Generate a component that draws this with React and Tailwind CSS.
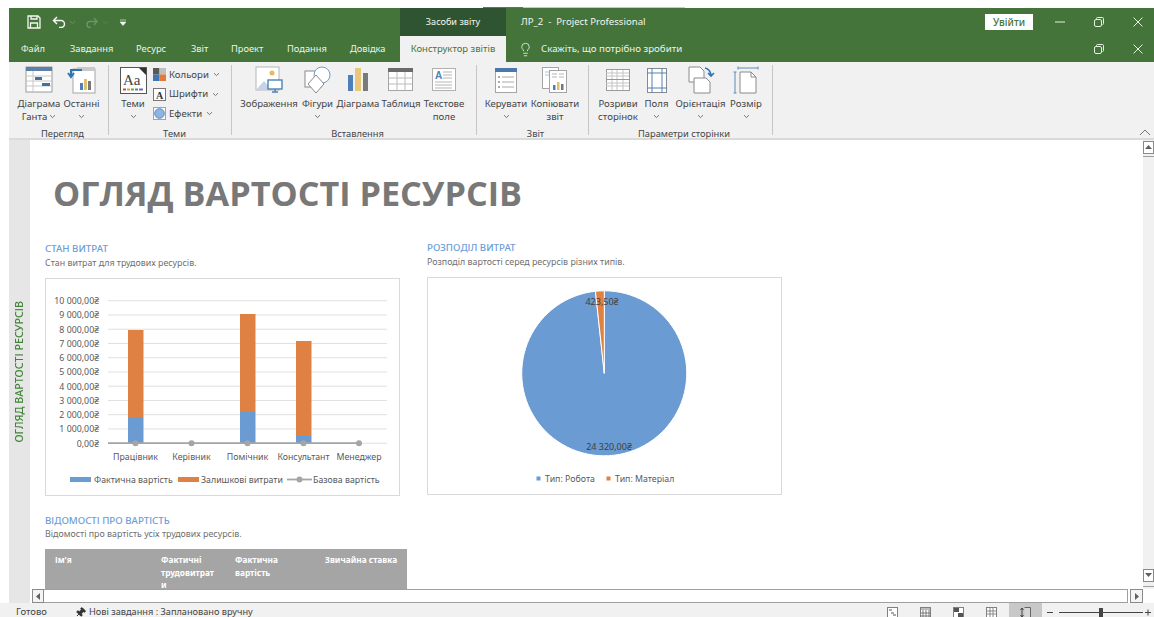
import { Pin, Lightbulb } from 'lucide-react'

const Chev = ({ className = '' }) => (
  <svg width="7" height="5" viewBox="0 0 7 5" className={className}>
    <path d="M1 1.2 3.5 3.6 6 1.2" fill="none" stroke="#777" strokeWidth="1" />
  </svg>
)

const Ico = ({ children }) => (
  <svg width="32" height="28" viewBox="0 0 32 28" fill="none">
    {children}
  </svg>
)

const GanttIcon = () => (
  <Ico>
    <rect x="3" y="1" width="26" height="25" fill="#fff" stroke="#9a9a9a" />
    <rect x="3" y="1" width="26" height="4" fill="#5a7fa8" />
    <path d="M3 10h26M3 15h26M3 20h26M10 5v21" stroke="#c8c8c8" />
    <rect x="12" y="11" width="7" height="3" fill="#41719c" />
    <rect x="19" y="17" width="8" height="3" fill="#41719c" />
  </Ico>
)
const RecentIcon = () => (
  <Ico>
    <rect x="7" y="3" width="22" height="24" fill="#fff" stroke="#a5a5a5" />
    <rect x="11" y="1" width="18" height="4" fill="#c9c9c9" />
    <rect x="14" y="17" width="3" height="7" fill="#4e7fb8" />
    <rect x="18" y="13" width="3" height="11" fill="#e0c070" />
    <rect x="22" y="15" width="3" height="9" fill="#777" />
    <path d="M16 4H5v6M2 7l3 4 3-4" stroke="#2e74b5" strokeWidth="2" />
  </Ico>
)
const ThemesIcon = () => (
  <svg width="27" height="27" viewBox="0 0 27 27" fill="none">
    <rect x=".5" y=".5" width="26" height="26" fill="#fff" stroke="#555" />
    <path d="M19 1h7v7z" fill="#333" />
    <text x="3" y="18" fontFamily="Liberation Serif, serif" fontSize="15" fill="#444">Aa</text>
    <path d="M3 22.5h3" stroke="#c0504d" strokeWidth="2" />
    <path d="M7 22.5h3" stroke="#e0a030" strokeWidth="2" />
    <path d="M11 22.5h3" stroke="#70a050" strokeWidth="2" />
    <path d="M15 22.5h3" stroke="#4e7fb8" strokeWidth="2" />
    <path d="M19 22.5h4" stroke="#8064a2" strokeWidth="2" />
  </svg>
)
const ColorsIcon = () => (
  <svg width="13" height="13" viewBox="0 0 13 13">
    <rect width="6.5" height="6.5" fill="#595959" />
    <rect x="6.5" width="6.5" height="6.5" fill="#bfbfbf" />
    <rect y="6.5" width="6.5" height="6.5" fill="#3f76b5" />
    <rect x="6.5" y="6.5" width="6.5" height="6.5" fill="#e07b39" />
  </svg>
)
const FontsIcon = () => (
  <svg width="13" height="13" viewBox="0 0 13 13">
    <rect x=".5" y=".5" width="12" height="12" fill="#fff" stroke="#777" />
    <text x="3" y="10.5" fontFamily="Liberation Serif, serif" fontWeight="700" fontSize="10" fill="#333">A</text>
  </svg>
)
const EffectsIcon = () => (
  <svg width="13" height="13" viewBox="0 0 13 13">
    <rect x=".5" y=".5" width="12" height="12" fill="#fff" stroke="#8aa9c9" />
    <circle cx="6.5" cy="6.5" r="4.8" fill="#8db4e2" stroke="#5a8ac0" />
  </svg>
)
const ImageIcon = () => (
  <Ico>
    <rect x="3" y="1" width="23" height="23" fill="#fff" stroke="#b5b5b5" />
    <circle cx="19" cy="7" r="2.5" fill="#e8b860" />
    <path d="M3 24l8-9 8 9z" fill="#c3d4e6" />
    <rect x="15" y="14" width="14" height="9" fill="#fff" stroke="#4e82bb" strokeWidth="1.4" />
    <path d="M19 26h6M22 23v3" stroke="#4e82bb" strokeWidth="1.4" />
  </Ico>
)
const ShapesIcon = () => (
  <Ico>
    <rect x="3" y="5" width="16" height="16" fill="#fff" stroke="#8a8a8a" />
    <circle cx="20" cy="9" r="8" fill="#fff" stroke="#6a9bd0" />
    <path d="M14 9l8 9-8 9-8-9z" fill="#fff" stroke="#8a8a8a" />
  </Ico>
)
const ChartIcon = () => (
  <Ico>
    <rect x="6" y="9" width="5" height="16" fill="#4e7fb8" />
    <rect x="13" y="2" width="6" height="23" fill="#e8c878" />
    <rect x="21" y="7" width="5" height="18" fill="#7a7a7a" />
  </Ico>
)
const TableIcon = () => (
  <Ico>
    <rect x="3.5" y="3.5" width="24" height="21" fill="#fff" stroke="#a5a5a5" />
    <rect x="3" y="2" width="25" height="4" fill="#6a6a6a" />
    <path d="M4 12h23M4 18h23M12 6v18M20 6v18" stroke="#bcbcbc" />
  </Ico>
)
const TextBoxIcon = () => (
  <Ico>
    <rect x="4.5" y="2.5" width="23" height="22" fill="#fff" stroke="#b0b0b0" />
    <text x="7" y="13" fontFamily="Liberation Sans, sans-serif" fontWeight="700" fontSize="10" fill="#4e82bb">A</text>
    <path d="M15 6h9M15 9h9M15 12h9M7 16h17M7 19h17M7 22h17" stroke="#b5b5b5" />
  </Ico>
)
const ManageIcon = () => (
  <Ico>
    <rect x="5.5" y="2.5" width="21" height="24" fill="#fff" stroke="#a5a5a5" />
    <rect x="5" y="2" width="22" height="4" fill="#4a78ad" />
    <path d="M8 11h2M8 16h2M8 21h2" stroke="#555" />
    <path d="M12 11h12M12 16h12M12 21h12" stroke="#aaa" />
  </Ico>
)
const CopyIcon = () => (
  <Ico>
    <rect x="3.5" y="1.5" width="16" height="21" fill="#fff" stroke="#a5a5a5" />
    <path d="M6 6h10M6 9h10" stroke="#a9c2de" />
    <rect x="10.5" y="4.5" width="17" height="22" fill="#fff" stroke="#a5a5a5" />
    <path d="M13 8h5M13 11h5M20 8h5M20 11h5" stroke="#b5b5b5" />
    <rect x="14" y="19" width="2.5" height="5" fill="#4e7fb8" />
    <rect x="18" y="16" width="2.5" height="8" fill="#e0c070" />
    <rect x="22" y="18" width="2.5" height="6" fill="#777" />
  </Ico>
)
const BreaksIcon = () => (
  <Ico>
    <rect x="4.5" y="3.5" width="23" height="21" fill="#fff" stroke="#9a9a9a" />
    <path d="M4 7h23M4 10h23M4 17h23M4 20h23M10 4v20M15 4v20M21 4v20" stroke="#c4c4c4" />
    <path d="M4 13.5h24" stroke="#7a9cc4" />
  </Ico>
)
const MarginsIcon = () => (
  <Ico>
    <rect x="6.5" y="2.5" width="19" height="24" fill="#fff" stroke="#8a8a8a" />
    <path d="M6 7h20M6 22h20" stroke="#4e82bb" />
    <path d="M11 2v25M21 2v25" stroke="#4e82bb" />
  </Ico>
)
const OrientationIcon = () => (
  <Ico>
    <path d="M4 1h11l4 4v11H4z" fill="#fff" stroke="#8a8a8a" />
    <path d="M9 12h12l4 4v11H9z" fill="#fff" stroke="#8a8a8a" />
    <path d="M20 2q5 1 6 7M23 7l3 3 3-3" stroke="#2e74b5" strokeWidth="1.6" />
  </Ico>
)
const SizeIcon = () => (
  <Ico>
    <path d="M10 6h11l5 5v16H10z" fill="#fff" stroke="#8a8a8a" />
    <path d="M21 6v5h5" stroke="#8a8a8a" />
    <path d="M8 2h20M8 .5v3M28 .5v3" stroke="#5a8ac0" />
    <path d="M5 6v21M3.5 6h3M3.5 27h3" stroke="#5a8ac0" />
  </Ico>
)

function RibbonButton({ icon, lines, chev, width }) {
  return (
    <div className={`flex shrink-0 flex-col items-center pt-[4px] ${width}`}>
      <div className="flex h-[28px] items-center justify-center">{icon}</div>
      <div className="mt-[3px] flex h-[13px] items-center gap-[2px] whitespace-nowrap leading-[13px]">
        {lines[0]}
        {chev === 'first' && <Chev />}
      </div>
      <div className="flex h-[13px] items-center gap-[2px] whitespace-nowrap leading-[13px]">
        {lines[1]}
        {chev === 'second' && <Chev />}
        {chev === 'below' && <Chev />}
      </div>
    </div>
  )
}

function Group({ label, className, children }) {
  return (
    <div className={`flex shrink-0 flex-col ${className}`}>
      <div className="flex h-[66px]">{children}</div>
      <div className="h-[10px] text-center text-[9.3px] leading-[12px]">{label}</div>
    </div>
  )
}

const Sep = () => <div className="my-[3px] w-px shrink-0 bg-[#c6c6c6]" />

function ThemeRow({ icon, label }) {
  return (
    <div className="flex h-[19.5px] items-center gap-[3px] whitespace-nowrap">
      {icon}
      <span>{label}</span>
      <Chev className="ml-px" />
    </div>
  )
}

function Ribbon() {
  return (
    <div className="flex h-[78px] shrink-0 border-b-2 border-[#dadada] bg-[#f1f1f1] text-[9.6px] text-[#444]">
      <Group label="Перегляд" className="w-[99px] pl-[8px]">
        <RibbonButton width="w-[44px]" icon={<GanttIcon />} lines={['Діаграма', 'Ганта']} chev="second" />
        <RibbonButton width="w-[41px]" icon={<RecentIcon />} lines={['Останні', '']} chev="below" />
      </Group>
      <Sep />
      <Group label="Теми" className="w-[122px] pl-[9px]">
        <RibbonButton width="w-[30px]" icon={<ThemesIcon />} lines={['Теми', '']} chev="below" />
        <div className="ml-[5px] flex flex-col pt-[3px]">
          <ThemeRow icon={<ColorsIcon />} label="Кольори" />
          <ThemeRow icon={<FontsIcon />} label="Шрифти" />
          <ThemeRow icon={<EffectsIcon />} label="Ефекти" />
        </div>
      </Group>
      <Sep />
      <Group label="Вставлення" className="w-[244px] pl-[7px]">
        <RibbonButton width="w-[60px]" icon={<ImageIcon />} lines={['Зображення', '']} />
        <RibbonButton width="w-[37px]" icon={<ShapesIcon />} lines={['Фігури', '']} chev="below" />
        <RibbonButton width="w-[44px]" icon={<ChartIcon />} lines={['Діаграма', '']} />
        <RibbonButton width="w-[42px]" icon={<TableIcon />} lines={['Таблиця', '']} />
        <RibbonButton width="w-[44px]" icon={<TextBoxIcon />} lines={['Текстове', 'поле']} />
      </Group>
      <Sep />
      <Group label="Звіт" className="w-[111px] pl-[6px]">
        <RibbonButton width="w-[46px]" icon={<ManageIcon />} lines={['Керувати', '']} chev="below" />
        <RibbonButton width="w-[52px]" icon={<CopyIcon />} lines={['Копіювати', 'звіт']} />
      </Group>
      <Sep />
      <Group label="Параметри сторінки" className="w-[183px] pl-[7px]">
        <RibbonButton width="w-[44px]" icon={<BreaksIcon />} lines={['Розриви', 'сторінок']} />
        <RibbonButton width="w-[33px]" icon={<MarginsIcon />} lines={['Поля', '']} chev="below" />
        <RibbonButton width="w-[55px]" icon={<OrientationIcon />} lines={['Орієнтація', '']} chev="below" />
        <RibbonButton width="w-[36px]" icon={<SizeIcon />} lines={['Розмір', '']} chev="below" />
      </Group>
      <Sep />
      <div className="ml-auto flex items-end pb-[2px] pr-[3px]">
        <svg width="12" height="7" viewBox="0 0 12 7">
          <path d="M1 6l5-5 5 5" fill="none" stroke="#777" />
        </svg>
      </div>
    </div>
  )
}

function WindowButtons({ minimize }) {
  const stroke = '#e6efe3'
  return (
    <div className="flex items-center">
      {minimize && (
        <svg width="10" height="2" viewBox="0 0 10 2" className="mr-[29px]">
          <path d="M0 1h10" stroke={stroke} />
        </svg>
      )}
      <svg width="10" height="10" viewBox="0 0 10 10" className="mr-[29px]">
        <rect x=".5" y="2.5" width="7" height="7" rx="1.5" fill="none" stroke={stroke} />
        <path d="M2.5 2.5V1.5a1 1 0 0 1 1-1h5a1 1 0 0 1 1 1v5a1 1 0 0 1-1 1" fill="none" stroke={stroke} />
      </svg>
      <svg width="10" height="10" viewBox="0 0 10 10" className="mr-[11px]">
        <path d="M.5.5l9 9M9.5.5l-9 9" stroke={stroke} />
      </svg>
    </div>
  )
}

function TitleBar() {
  return (
    <div className="flex h-[28px] shrink-0 items-center bg-[#44743a] text-[10px] text-[#f3f6f1]">
      <div className="flex h-full w-[391px] items-center pl-[18px]">
        <svg width="14" height="14" viewBox="0 0 14 14" fill="none" stroke="#f3f6f1" strokeWidth="1.3">
          <path d="M1 1h10l2 2v10H1z" />
          <path d="M4 1v3h6V1M3.5 13V8h7v5" />
        </svg>
        <svg width="14" height="12" viewBox="0 0 14 12" fill="none" stroke="#f3f6f1" strokeWidth="1.5" className="ml-[11px]">
          <path d="M5 1L1.5 4.5 5 8M2 4.5h7a3.5 3.5 0 0 1 0 7H7" />
        </svg>
        <Chev className="ml-[3px] opacity-80 invert" />
        <svg width="13" height="11" viewBox="0 0 13 11" fill="none" stroke="#6f9567" strokeWidth="1.4" className="ml-[9px]">
          <path d="M9 1l3 3.5L9 8M12 4.5H5a3 3 0 0 0 0 6h1" />
        </svg>
        <Chev className="ml-[4px] opacity-40 invert" />
        <svg width="6" height="7" viewBox="0 0 6 7" className="ml-[11px]">
          <path d="M0 1h6M0 3h6l-3 3.5z" fill="#f3f6f1" stroke="#f3f6f1" strokeWidth=".6" />
        </svg>
      </div>
      <div className="flex h-full w-[106px] items-center justify-center bg-[#2f5431] text-[9.1px]">Засоби звіту</div>
      <div className="ml-[15px] whitespace-pre text-[9.6px]">ЛР_2  -  Project Professional</div>
      <div className="ml-auto mr-[22px] flex h-[16px] w-[48px] items-center justify-center bg-white text-[10px] font-medium text-[#44743a]">
        Увійти
      </div>
      <WindowButtons minimize />
    </div>
  )
}

function TabBar() {
  const tabs = [
    ['Файл', 'w-[49px]'],
    ['Завдання', 'w-[66px]'],
    ['Ресурс', 'w-[55px]'],
    ['Звіт', 'w-[40px]'],
    ['Проект', 'w-[56px]'],
    ['Подання', 'w-[63px]'],
    ['Довідка', 'w-[50px]'],
  ]
  return (
    <div className="flex h-[26px] shrink-0 items-center bg-[#44743a] text-[9.3px] text-[#eef3ec]">
      <div className="flex w-[391px] shrink-0 pl-[12px]">
        {tabs.map(([name, width]) => (
          <span key={name} className={width}>{name}</span>
        ))}
      </div>
      <div className="flex h-full w-[106px] items-center justify-center bg-[#f1f1f1] text-[9.5px] text-[#44743a]">Конструктор звітів</div>
      <Lightbulb size={15} strokeWidth={1.3} className="ml-[12px]" />
      <span className="ml-[8px] text-[9.7px]">Скажіть, що потрібно зробити</span>
      <div className="ml-auto">
        <WindowButtons />
      </div>
    </div>
  )
}

function CostChart() {
  const ticks = ['10 000,00₴', '9 000,00₴', '8 000,00₴', '7 000,00₴', '6 000,00₴', '5 000,00₴', '4 000,00₴', '3 000,00₴', '2 000,00₴', '1 000,00₴', '0,00₴']
  const bars = [
    { x: 83, top: 52, mid: 140 },
    { x: 195, top: 36, mid: 134 },
    { x: 251, top: 63, mid: 158 },
  ]
  const cats = [
    ['Працівник', 90.5],
    ['Керівник', 146.5],
    ['Помічник', 202.5],
    ['Консультант', 258.5],
    ['Менеджер', 314],
  ]
  return (
    <svg width="353" height="216" viewBox="1 1 353 216" fontFamily="Noto Sans, sans-serif" fontSize="8.8" fill="#595959">
      {ticks.map((t, i) => {
        const y = 22.7 + i * 14.25
        return (
          <g key={t}>
            <path d={`M63 ${y}H342`} stroke="#e0e0e0" />
            <text x="54" y={y + 3.5} textAnchor="end">{t}</text>
          </g>
        )
      })}
      {bars.map((b) => (
        <g key={b.x}>
          <rect x={b.x} y={b.top} width="15.5" height={b.mid - b.top} fill="#e08144" />
          <rect x={b.x} y={b.mid} width="15.5" height={165 - b.mid} fill="#6a9bd2" />
        </g>
      ))}
      <path d="M63 165.2H314" stroke="#a5a5a5" strokeWidth="1.8" />
      {cats.map(([name, x]) => (
        <g key={name}>
          <circle cx={x} cy="165.2" r="3" fill="#a5a5a5" />
          <text x={x} y="182" textAnchor="middle">{name}</text>
        </g>
      ))}
      <rect x="25" y="199" width="21" height="5" fill="#6a9bd2" />
      <text x="49" y="204.5">Фактична вартість</text>
      <rect x="133" y="199" width="21" height="5" fill="#e08144" />
      <text x="156" y="204.5">Залишкові витрати</text>
      <path d="M242 201.5h25" stroke="#a5a5a5" strokeWidth="1.8" />
      <circle cx="254.5" cy="201.5" r="3" fill="#a5a5a5" />
      <text x="268" y="204.5">Базова вартість</text>
    </svg>
  )
}

function CostPie() {
  const cx = 177.3
  const cy = 96.3
  const r = 82.5
  const lx = cx - 8.85
  const ly = cy - 82.03
  return (
    <svg width="353" height="216" viewBox="1 1 353 216" fontFamily="Noto Sans, sans-serif" fontSize="9" fill="#404040">
      <path
        d={`M${cx} ${cy}L${cx} ${cy - r}A${r} ${r} 0 1 1 ${lx} ${ly}Z`}
        fill="#6a9bd2"
        stroke="#fff"
        strokeWidth="1"
      />
      <path d={`M${cx} ${cy}L${lx} ${ly}A${r} ${r} 0 0 1 ${cx} ${cy - r}Z`} fill="#e08144" stroke="#fff" strokeWidth="1" />
      <text x="175" y="27.5" textAnchor="middle">423,50₴</text>
      <text x="182" y="172.5" textAnchor="middle">24 320,00₴</text>
      <rect x="109.5" y="199.5" width="4" height="4" fill="#6a9bd2" />
      <text x="118" y="204.5" fontSize="8.8" fill="#595959">Тип: Робота</text>
      <rect x="179.5" y="199.5" width="4" height="4" fill="#e08144" />
      <text x="188" y="204.5" fontSize="8.8" fill="#595959">Тип: Матеріал</text>
    </svg>
  )
}

function ChartCard({ title, sub, className, children }) {
  return (
    <div className={`w-[355px] shrink-0 ${className}`}>
      <div className="h-[14px] text-[9.7px] font-medium leading-[14px] text-[#6d9ed6]">{title}</div>
      <div className="h-[14px] text-[8.85px] leading-[14px] text-[#6f6f6f]">{sub}</div>
      <div className="mt-[8px] h-[218px] w-[355px] border border-[#d9d9d9] bg-white">{children}</div>
    </div>
  )
}

function ScrollArrow({ dir }) {
  const d = {
    up: 'M4.5 2 8 6H1z',
    down: 'M1 2h7L4.5 6z',
    left: 'M6 1v7L2 4.5z',
    right: 'M3 1v7l4-3.5z',
  }[dir]
  return (
    <svg width="9" height="9" viewBox="0 0 9 9">
      <path d={d} fill="#606060" />
    </svg>
  )
}

function Report() {
  return (
    <div className="min-w-0 flex-1 overflow-hidden bg-white pl-[15px]">
      <div className="ml-[8px] whitespace-nowrap pt-[32px] font-['Open_Sans',sans-serif] text-[34.2px] font-bold leading-[42px] text-[#787878]">
        ОГЛЯД ВАРТОСТІ РЕСУРСІВ
      </div>
      <div className="mt-[28px] flex items-start">
        <ChartCard title="СТАН ВИТРАТ" sub="Стан витрат для трудових ресурсів.">
          <CostChart />
        </ChartCard>
        <ChartCard title="РОЗПОДІЛ ВИТРАТ" sub="Розподіл вартості серед ресурсів різних типів." className="-mt-px ml-[27px]">
          <CostPie />
        </ChartCard>
      </div>
      <div className="mt-[18px] h-[14px] text-[9.7px] font-medium leading-[14px] text-[#6d9ed6]">ВІДОМОСТІ ПРО ВАРТІСТЬ</div>
      <div className="h-[12px] text-[8.85px] leading-[12px] text-[#6f6f6f]">Відомості про вартість усіх трудових ресурсів.</div>
      <div className="mt-[9px] grid h-[56px] w-[362px] grid-cols-[116px_74px_90px_82px] bg-[#a5a5a5] pt-[5px] text-[8.3px] font-bold leading-[12.5px] text-white">
        <div className="pl-[10px]">Ім'я</div>
        <div>Фактичні<br />трудовитрат<br />и</div>
        <div>Фактична<br />вартість</div>
        <div>Звичайна ставка</div>
      </div>
    </div>
  )
}

function VerticalScroll() {
  return (
    <div className="flex w-[11px] shrink-0 flex-col bg-[#f1f1f1] pt-[1px]">
      <div className="flex h-[13px] items-center justify-center border border-[#8a8a8a] bg-white">
        <ScrollArrow dir="up" />
      </div>
      <div className="h-[3px] border-b border-[#a0a0a0]" />
      <div className="flex-1" />
      <div className="flex h-[13px] items-center justify-center border border-[#8a8a8a] bg-white">
        <ScrollArrow dir="down" />
      </div>
      <div className="mt-[4px] h-px bg-[#a0a0a0]" />
      <div className="h-[2px]" />
    </div>
  )
}

function HorizontalScroll() {
  return (
    <div className="flex h-[14px] shrink-0 bg-white pl-[2px] pr-[11px]">
      <div className="flex w-[12px] items-center justify-center border border-[#8a8a8a] bg-[#f4f4f4]">
        <ScrollArrow dir="left" />
      </div>
      <div className="flex-1 border-y border-r border-[#a0a0a0]" />
      <div className="ml-[2px] flex w-[13px] items-center justify-center border border-[#8a8a8a] bg-[#f4f4f4]">
        <ScrollArrow dir="right" />
      </div>
    </div>
  )
}

function StatusBar() {
  return (
    <div className="flex h-[18px] shrink-0 items-center bg-[#f1f1f1] text-[9.5px] text-[#444]">
      <span className="ml-[16px]">Готово</span>
      <Pin size={11} fill="#333" stroke="#333" className="ml-[28px] rotate-45" />
      <span className="ml-[3px] text-[9.2px]">Нові завдання : Заплановано вручну</span>
      <div className="ml-auto flex h-full items-center">
        {[0, 1, 2, 3].map((i) => (
          <svg key={i} width="11" height="11" viewBox="0 0 11 11" className={i === 0 ? '' : 'ml-[22px]'}>
            <rect x=".5" y=".5" width="10" height="10" fill="#fff" stroke="#808080" />
            {i === 0 && <path d="M2 3h3M4 6h3M6 8h3" stroke="#555" />}
            {i === 1 && <path d="M0 2h11M3 3v8M6 3v8M9 3v8M0 6h11M0 9h11" stroke="#777" />}
            {i === 2 && <path d="M1 1h5v4H1zM5 6h5v4H5z" fill="#555" />}
            {i === 3 && <path d="M4 0v11M7 0v11M0 4h11M0 7h11" stroke="#888" />}
          </svg>
        ))}
        <div className="ml-[12px] flex h-full w-[33px] items-center justify-center bg-[#c8c8c8]">
          <svg width="11" height="11" viewBox="0 0 11 11">
            <path d="M4.5.5h6v10h-6" fill="#d6d6d6" stroke="#666" />
            <path d="M2 1v9M.5 3 2 1l1.5 2M.5 8 2 10l1.5-2" fill="none" stroke="#444" />
          </svg>
        </div>
        <svg width="104" height="11" viewBox="0 0 104 11" className="ml-[5px] mr-[3px]">
          <path d="M0 5.5h6M98 5.5h6M101 2.5v6M12 5.5h84" stroke="#444" />
          <rect x="52" y="1" width="4" height="9" fill="#444" />
        </svg>
      </div>
    </div>
  )
}

export default function App() {
  return (
    <div className="h-[617px] w-[1154px] overflow-hidden bg-white">
      <div className='flex h-[621px] flex-col font-["Noto_Sans","Open_Sans",sans-serif]'>
        <div className="flex h-[8px] shrink-0 items-end pl-[483px]">
          <div className="h-px w-[40px] bg-[#7a5aa8]" />
          <div className="h-px w-[162px] bg-[#c9c9c9]" />
        </div>
        <div className="ml-[9px] flex min-h-0 flex-1 flex-col">
          <TitleBar />
          <TabBar />
          <Ribbon />
          <div className="flex min-h-0 flex-1">
            <div className="flex w-[21px] shrink-0 items-center justify-center bg-[#e6e6e6]">
              <span className="whitespace-nowrap text-[10.7px] font-medium text-[#44843a] [writing-mode:vertical-rl] rotate-180">
                ОГЛЯД ВАРТОСТІ РЕСУРСІВ
              </span>
            </div>
            <div className="flex min-w-0 flex-1 flex-col">
              <div className="flex min-h-0 flex-1">
                <Report />
                <VerticalScroll />
              </div>
              <HorizontalScroll />
            </div>
          </div>
        </div>
        <StatusBar />
      </div>
    </div>
  )
}
